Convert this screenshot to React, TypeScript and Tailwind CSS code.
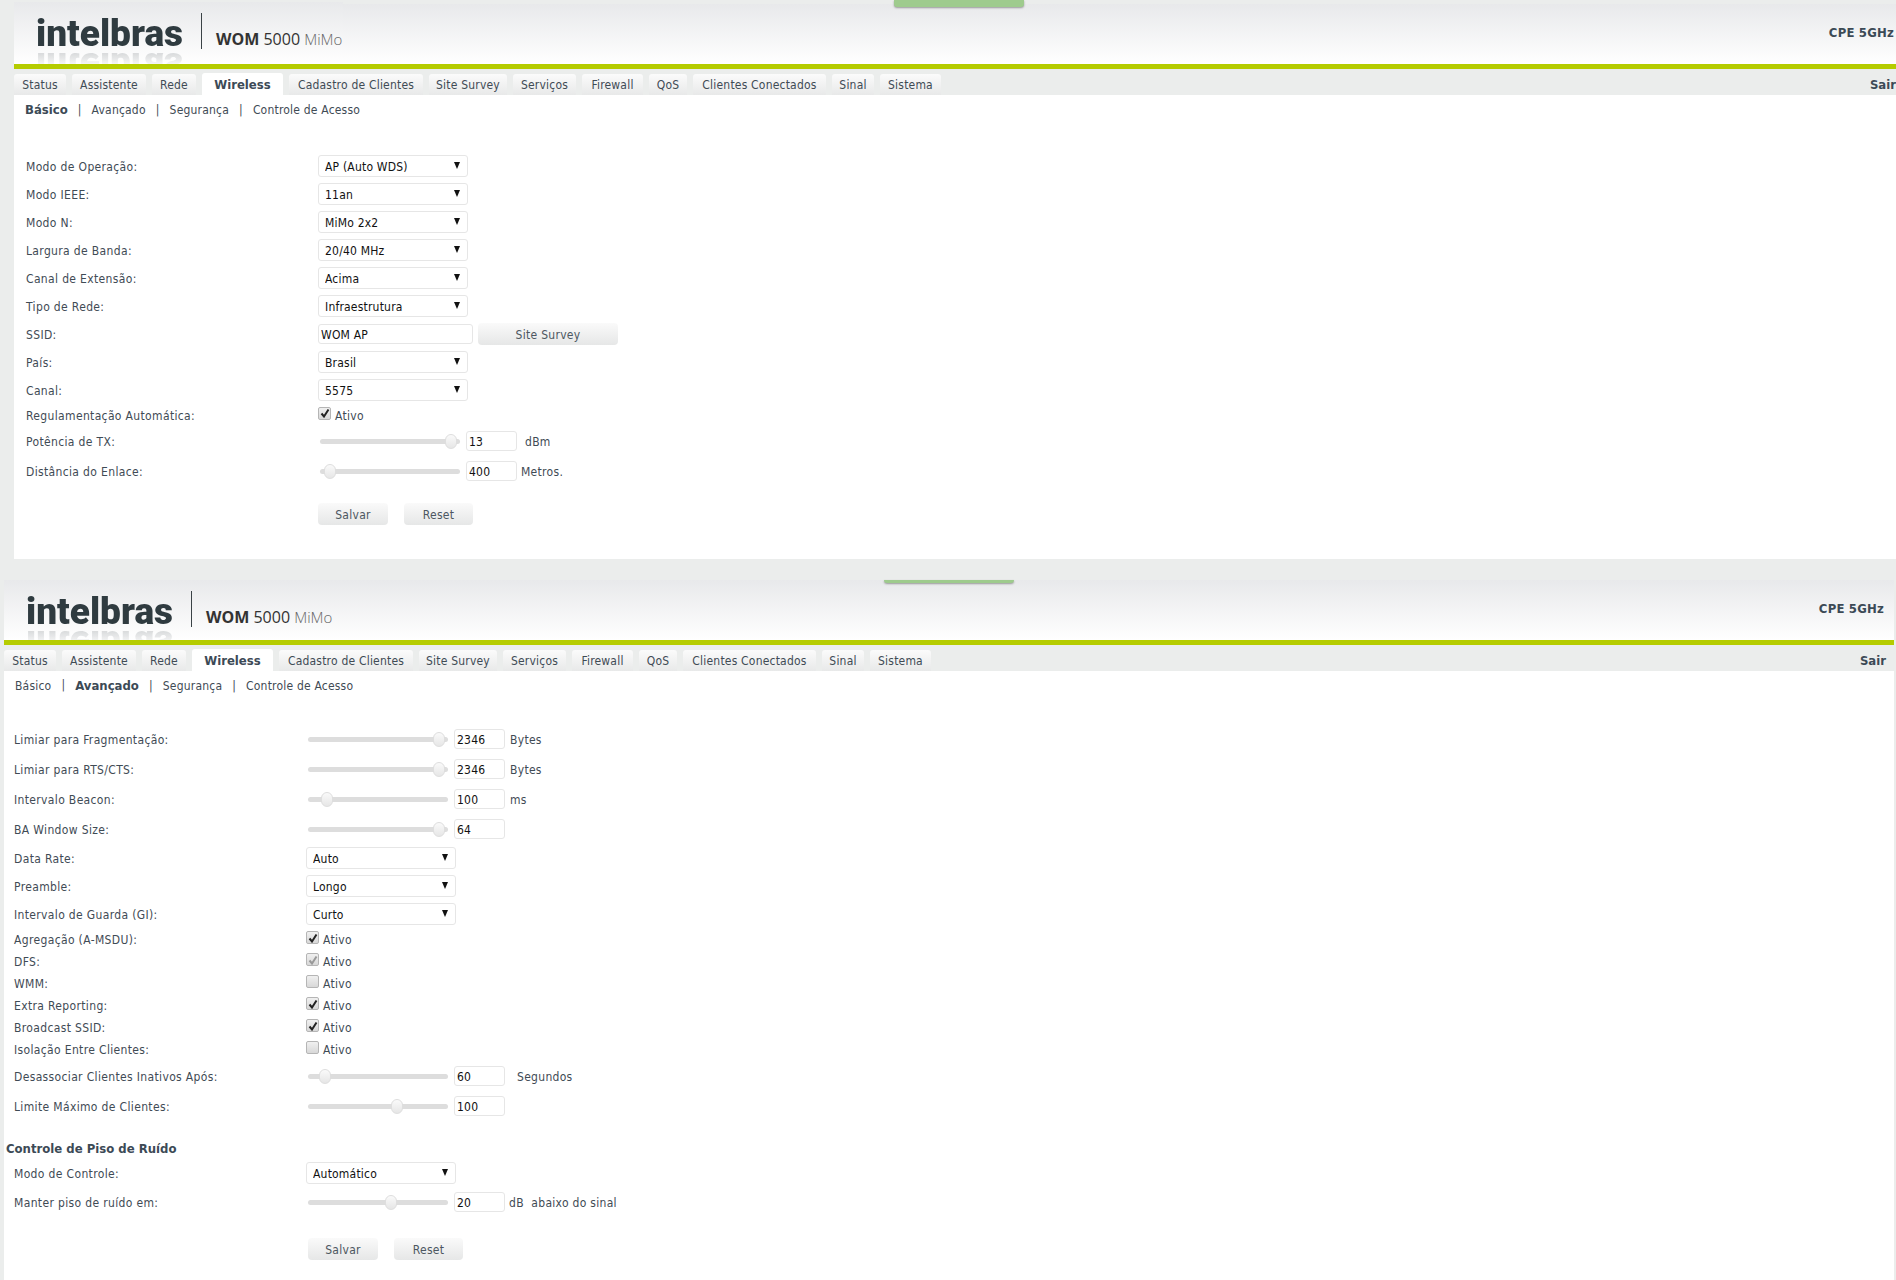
const TABS = [
  { label: 'Status', w: 'w-[52px]' },
  { label: 'Assistente', w: 'w-[74px]' },
  { label: 'Rede', w: 'w-[44px]' },
  { label: 'Wireless', w: 'w-[81px]' },
  { label: 'Cadastro de Clientes', w: 'w-[134px]' },
  { label: 'Site Survey', w: 'w-[78px]' },
  { label: 'Serviços', w: 'w-[63px]' },
  { label: 'Firewall', w: 'w-[61px]' },
  { label: 'QoS', w: 'w-[38px]' },
  { label: 'Clientes Conectados', w: 'w-[133px]' },
  { label: 'Sinal', w: 'w-[42px]' },
  { label: 'Sistema', w: 'w-[61px]' },
];
const SUBTABS = ['Básico', 'Avançado', 'Segurança', 'Controle de Acesso'];

function Logo() {
  return (
    <div className="relative shrink-0 ml-[22px] w-[150px] h-full overflow-hidden [font-family:Roboto,sans-serif] font-black text-[37px] leading-[40px] text-[#2f3b40]">
      <div className="absolute left-0 top-[12px] [-webkit-box-reflect:below_-9px_linear-gradient(transparent_40%,rgba(0,0,0,0.25))]">intelbras</div>
    </div>
  );
}

function Header({ tall }: { tall: boolean }) {
  return (
    <div className={tall ? 'flex items-end h-[62px]' : 'flex items-end h-[60px]'}>
      <div className="flex shrink-0 w-[329px] h-full bg-gradient-to-b from-[#e8e9eb] to-[#ffffff]">
        <Logo />
        <div className="shrink-0 w-px h-[36px] mt-[11px] ml-[15px] bg-[#3a4246]" />
        <div className="ml-[14px] mt-[27px] [font-family:'Open_Sans',sans-serif] text-[16px] leading-[20px] whitespace-nowrap text-[#333]">
          <span className="font-bold">WOM</span> 5000 <span className="text-[15px] text-[#666] font-light">MiMo</span>
        </div>
      </div>
      <div className="flex-1 h-[60px] flex justify-end pr-[10px] pt-[21px] bg-gradient-to-b from-[#e8e9eb] to-[#ffffff]">
        <span className="font-bold text-[13px] leading-[16px] tracking-[0.2px] text-[#3c4a56]">CPE 5GHz</span>
      </div>
    </div>
  );
}

function Tabs() {
  return (
    <div className="flex justify-between h-[26px] pt-[5px] pr-[8px] bg-[#ebedec]">
      <div className="flex gap-[6px]">
        {TABS.map((t) =>
          t.label === 'Wireless' ? (
            <div key={t.label} className={`${t.w} h-[22px] -mt-px rounded-t-[3px] bg-white text-center font-bold text-[13px] leading-[24px] text-[#3c4a56]`}>{t.label}</div>
          ) : (
            <div key={t.label} className={`${t.w} h-[21px] rounded-t-[3px] bg-gradient-to-b from-[#fbfbfb] to-[#e8e9e9] text-center text-[12px] leading-[23px] tracking-[0.2px] text-[#3f4b55]`}>{t.label}</div>
          ),
        )}
      </div>
      <span className="font-bold text-[13px] leading-[21px] text-[#3c4a56]">Sair</span>
    </div>
  );
}

function SubNav({ active }: { active: string }) {
  return (
    <div className="flex h-[30px] pl-[11px] items-center gap-[10px] text-[12px] tracking-[0.2px] text-[#3f4b55]">
      {SUBTABS.map((s, i) => (
        <div key={s} className="flex gap-[10px]">
          {i > 0 && <span>|</span>}
          <span className={s === active ? 'font-bold text-[13px] tracking-normal text-[#3c4a56]' : ''}>{s}</span>
        </div>
      ))}
    </div>
  );
}

function Row({ label, h, children }: { label: string; h: string; children: React.ReactNode }) {
  return (
    <div className={`flex items-center ${h}`}>
      <div className="w-[292px] pt-[2px] text-[12px] tracking-[0.35px] text-[#3f4b55]">{label}</div>
      <div className="flex items-center">{children}</div>
    </div>
  );
}

function Dropdown({ value }: { value: string }) {
  return (
    <div className="relative w-[150px] h-[22px]">
      <select defaultValue={value} className="appearance-none w-full h-full pl-[6px] pt-[2px] rounded-[3px] border border-[#e6e6e6] bg-white text-[12px] tracking-[0.2px] text-[#111]">
        <option>{value}</option>
      </select>
      <svg className="absolute right-[8px] top-[7px]" width="6" height="7" viewBox="0 0 6 7"><path d="M0 0H6L3 7Z" fill="#111" /></svg>
    </div>
  );
}

function TextBox({ value, w }: { value: string; w: string }) {
  return (
    <input readOnly value={value} className={`${w} h-[20px] px-[2px] pt-[2px] rounded-[3px] border border-[#e6e6e6] bg-white text-[12px] tracking-[0.2px] text-[#111]`} />
  );
}

function Check({ on, muted }: { on: boolean; muted?: boolean }) {
  return (
    <span className="flex items-center -mt-[3px] justify-center w-[13px] h-[13px] rounded-[2px] border border-[#b5b5b5] bg-gradient-to-b from-[#f0f0f0] to-[#d8d8d8]">
      {on && (
        <svg width="10" height="10" viewBox="0 0 10 10">
          <path d="M1.5 5.5L4 8.5L8.5 1.5" fill="none" stroke={muted ? '#999' : '#222'} strokeWidth="2" />
        </svg>
      )}
    </span>
  );
}

function Ativo({ on, muted }: { on: boolean; muted?: boolean }) {
  return (
    <div className="flex items-center gap-[4px] text-[12px] tracking-[0.3px] text-[#3f4b55]">
      <Check on={on} muted={muted} />
      <span className="pt-[2px]">Ativo</span>
    </div>
  );
}

function Slider({ pos, value, unit, unitGap = 'ml-[8px]' }: { pos: number; value: string; unit?: string; unitGap?: string }) {
  return (
    <>
      <div className="relative ml-[2px] w-[140px] h-[5px] rounded-full bg-[#dddddd]">
        <div className="absolute top-[-5px] w-[12px] h-[15px] rounded-[6px] border border-[#dedede] bg-gradient-to-b from-[#fafafa] to-[#e6e6e6]" style={{ left: pos - 6 }} />
      </div>
      <div className="ml-[6px]"><TextBox value={value} w="w-[51px]" /></div>
      {unit && <span className={`${unitGap} pt-[2px] text-[12px] tracking-[0.3px] whitespace-pre text-[#3f4b55]`}>{unit}</span>}
    </>
  );
}

function Btn({ label, w }: { label: string; w: string }) {
  return (
    <div className={`${w} h-[22px] rounded-[4px] bg-gradient-to-b from-[#fafafa] to-[#e6e7e7] text-center text-[12px] leading-[24px] tracking-[0.3px] text-[#4c5761]`}>{label}</div>
  );
}

function Buttons({ pad }: { pad: string }) {
  return (
    <div className={`flex gap-[16px] ${pad}`}>
      <Btn label="Salvar" w="w-[70px]" />
      <Btn label="Reset" w="w-[69px]" />
    </div>
  );
}

function BasicForm() {
  return (
    <div className="pl-[12px] pt-[27px] pb-[34px]">
      <Row label="Modo de Operação:" h="h-[28px]"><Dropdown value="AP (Auto WDS)" /></Row>
      <Row label="Modo IEEE:" h="h-[28px]"><Dropdown value="11an" /></Row>
      <Row label="Modo N:" h="h-[28px]"><Dropdown value="MiMo 2x2" /></Row>
      <Row label="Largura de Banda:" h="h-[28px]"><Dropdown value="20/40 MHz" /></Row>
      <Row label="Canal de Extensão:" h="h-[28px]"><Dropdown value="Acima" /></Row>
      <Row label="Tipo de Rede:" h="h-[28px]"><Dropdown value="Infraestrutura" /></Row>
      <Row label="SSID:" h="h-[28px]">
        <TextBox value="WOM AP" w="w-[155px]" />
        <div className="ml-[5px]"><Btn label="Site Survey" w="w-[140px]" /></div>
      </Row>
      <Row label="País:" h="h-[28px]"><Dropdown value="Brasil" /></Row>
      <Row label="Canal:" h="h-[28px]"><Dropdown value="5575" /></Row>
      <Row label="Regulamentação Automática:" h="h-[22px] pb-px"><Ativo on /></Row>
      <Row label="Potência de TX:" h="h-[30px]"><Slider pos={131} value="13" unit="dBm" /></Row>
      <Row label="Distância do Enlace:" h="h-[30px]"><Slider pos={10} value="400" unit="Metros." unitGap="ml-[4px]" /></Row>
      <div className="mt-[17px]"><Buttons pad="pl-[292px]" /></div>
    </div>
  );
}

function AdvancedForm() {
  return (
    <div className="pl-[10px] pt-[23px] pb-[20px]">
      <Row label="Limiar para Fragmentação:" h="h-[30px]"><Slider pos={131} value="2346" unit="Bytes" unitGap="ml-[5px]" /></Row>
      <Row label="Limiar para RTS/CTS:" h="h-[30px]"><Slider pos={131} value="2346" unit="Bytes" unitGap="ml-[5px]" /></Row>
      <Row label="Intervalo Beacon:" h="h-[30px]"><Slider pos={19} value="100" unit="ms" unitGap="ml-[5px]" /></Row>
      <Row label="BA Window Size:" h="h-[30px]"><Slider pos={131} value="64" /></Row>
      <Row label="Data Rate:" h="h-[28px]"><Dropdown value="Auto" /></Row>
      <Row label="Preamble:" h="h-[28px]"><Dropdown value="Longo" /></Row>
      <Row label="Intervalo de Guarda (GI):" h="h-[28px]"><Dropdown value="Curto" /></Row>
      <Row label="Agregação (A-MSDU):" h="h-[22px]"><Ativo on /></Row>
      <Row label="DFS:" h="h-[22px]"><Ativo on muted /></Row>
      <Row label="WMM:" h="h-[22px]"><Ativo on={false} /></Row>
      <Row label="Extra Reporting:" h="h-[22px]"><Ativo on /></Row>
      <Row label="Broadcast SSID:" h="h-[22px]"><Ativo on /></Row>
      <Row label="Isolação Entre Clientes:" h="h-[22px]"><Ativo on={false} /></Row>
      <div className="mt-px" />
      <Row label="Desassociar Clientes Inativos Após:" h="h-[30px]"><Slider pos={17} value="60" unit="Segundos" unitGap="ml-[12px]" /></Row>
      <Row label="Limite Máximo de Clientes:" h="h-[30px]"><Slider pos={89} value="100" /></Row>
      <div className="h-[37px] pt-[20px] -ml-[8px] font-bold text-[13px] leading-[16px] text-[#3c4a56]">Controle de Piso de Ruído</div>
      <div className="mt-px" />
      <Row label="Modo de Controle:" h="h-[28px]"><Dropdown value="Automático" /></Row>
      <Row label="Manter piso de ruído em:" h="h-[30px]"><Slider pos={83} value="20" unit={'dB  abaixo do sinal'} unitGap="ml-[4px]" /></Row>
      <div className="mt-[21px]"><Buttons pad="pl-[294px]" /></div>
    </div>
  );
}

function Panel({ tall, active, children }: { tall: boolean; active: string; children: React.ReactNode }) {
  return (
    <div className="w-[1890px]">
      <Header tall={tall} />
      <div className="h-[5px] bg-[#b5cc00]" />
      <Tabs />
      <div className="bg-white">
        <SubNav active={active} />
        {children}
      </div>
    </div>
  );
}

export default function App() {
  return (
    <div className="relative w-[1896px] h-[1280px] overflow-hidden bg-[#ebedec] [font-family:'DejaVu_Sans_Condensed','DejaVu_Sans',sans-serif] text-[12px]">
      <div className="absolute left-[894px] top-0 w-[130px] h-[7px] rounded-b-[3px] bg-[#9ecb8d] shadow-[0_1px_2px_#999]" />
      <div className="pl-[14px] pt-[2px]">
        <Panel tall active="Básico"><BasicForm /></Panel>
      </div>
      <div className="pl-[4px] pt-[21px]">
        <Panel tall={false} active="Avançado"><AdvancedForm /></Panel>
      </div>
      <div className="absolute left-[884px] top-[580px] w-[130px] h-[3px] rounded-b-[3px] bg-[#9ecb8d] shadow-[0_1px_2px_#999]" />
    </div>
  );
}
